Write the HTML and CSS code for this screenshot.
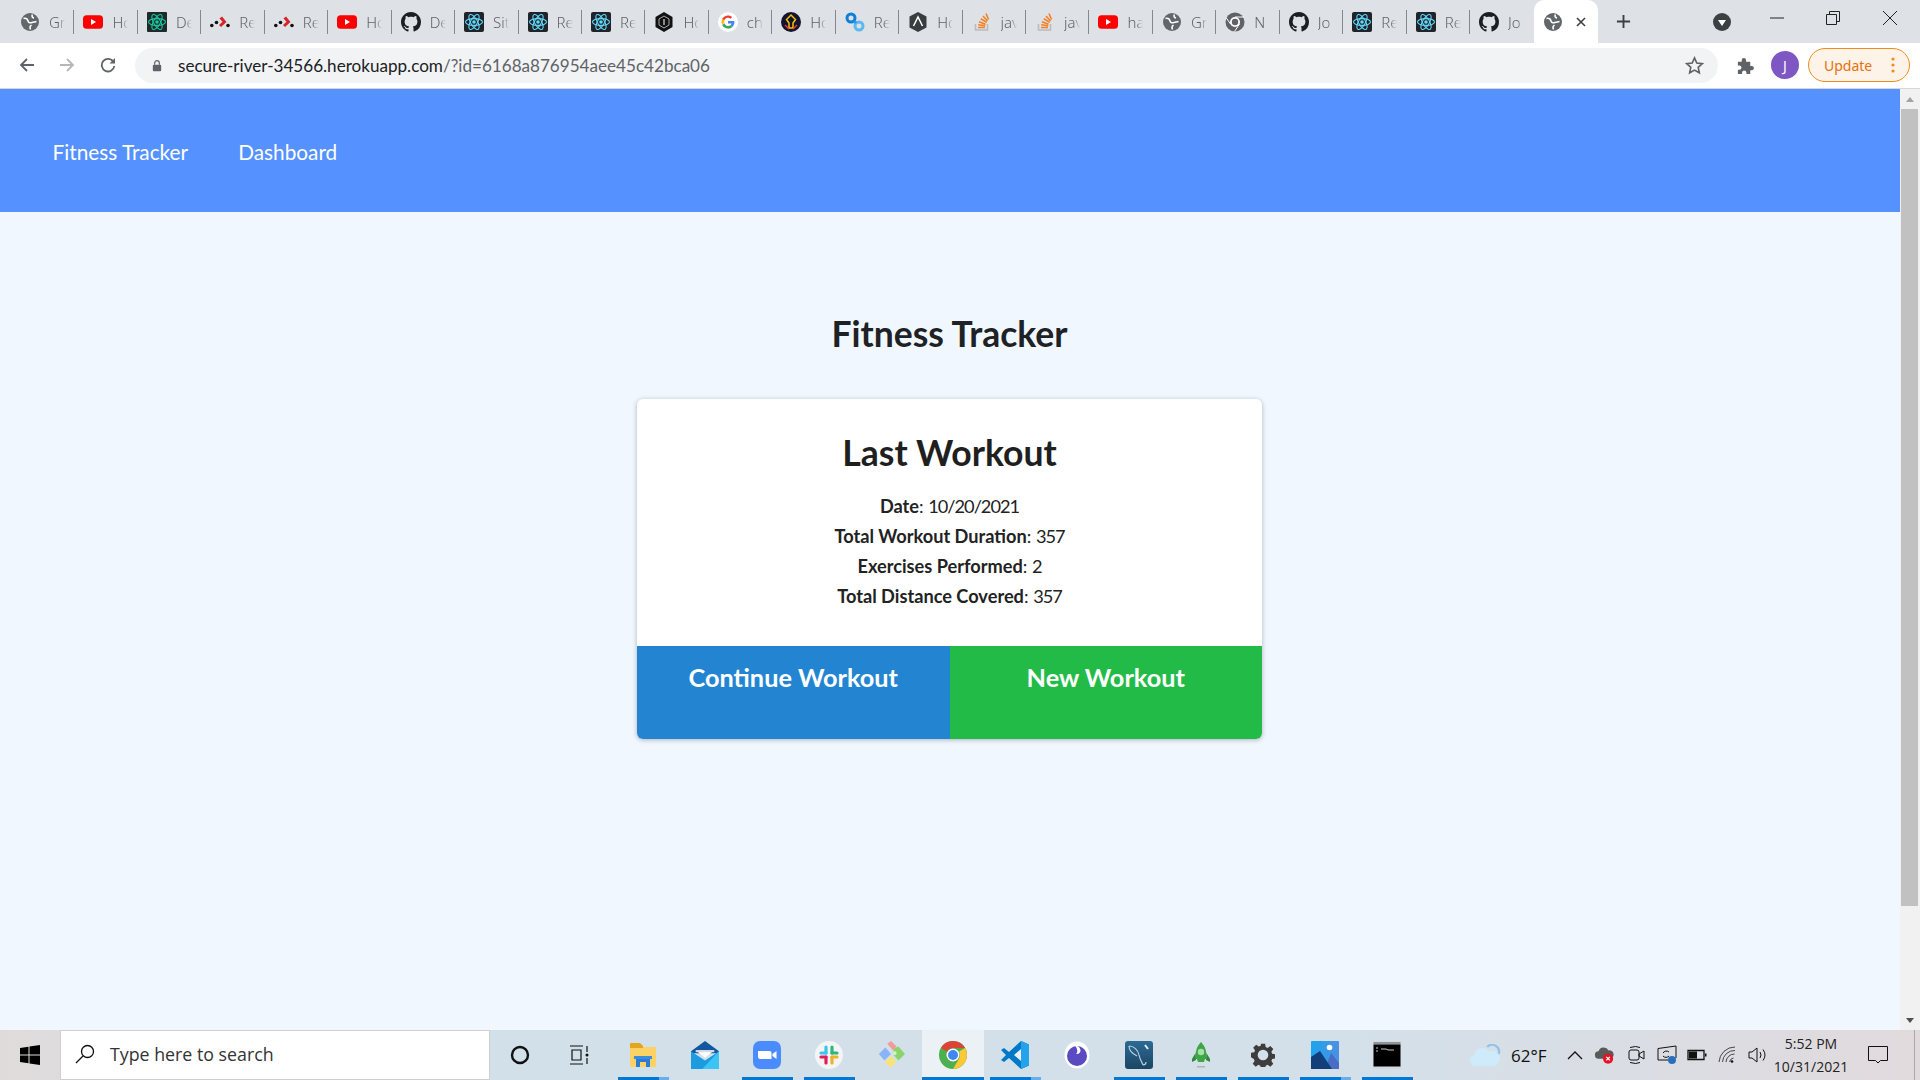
FILE: index.html
```html
<!DOCTYPE html>
<html lang="en">
<head>
<meta charset="utf-8">
<title>Fitness Tracker</title>
<link rel="stylesheet" href="styles.css">
</head>
<body>
<svg class="defs" aria-hidden="true">
  <symbol id="globe" viewBox="0 0 20 20"><circle cx="10" cy="10" r="9" fill="#63676b"/><path d="M3.500 6.500c2.500-.5 4 .5 4.500 2.500s2.500 2 4 1.500 2.500-.5 4.500-1M10.500 17.500c-1-2-.5-3.500 1-4.500M12.500 2.500c-1 1.500-.5 3 1.500 3.500" fill="none" stroke="#fff" stroke-width="1.500"/></symbol>
  <symbol id="yt" viewBox="0 0 20 20"><rect y="3.200" width="20" height="13.600" rx="3.500" fill="#f00"/><path d="M8 7l5 3-5 3z" fill="#fff"/></symbol>
  <symbol id="atomg" viewBox="0 0 20 20"><rect width="20" height="20" rx="1" fill="#1f2a2c"/><g fill="none" stroke="#1ec8a0" stroke-width="1.100"><ellipse cx="10" cy="10" rx="8.500" ry="3.400"/><ellipse cx="10" cy="10" rx="8.500" ry="3.400" transform="rotate(60 10 10)"/><ellipse cx="10" cy="10" rx="8.500" ry="3.400" transform="rotate(120 10 10)"/></g><circle cx="10" cy="10" r="1.800" fill="#1ec8a0"/></symbol>
  <symbol id="atomb" viewBox="0 0 20 20"><rect width="20" height="20" rx="2" fill="#20232a"/><g fill="none" stroke="#61dafb" stroke-width="1.100"><ellipse cx="10" cy="10" rx="8.500" ry="3.400"/><ellipse cx="10" cy="10" rx="8.500" ry="3.400" transform="rotate(60 10 10)"/><ellipse cx="10" cy="10" rx="8.500" ry="3.400" transform="rotate(120 10 10)"/></g><circle cx="10" cy="10" r="1.800" fill="#61dafb"/></symbol>
  <symbol id="dots" viewBox="0 0 20 20"><circle cx="1.800" cy="13.500" r="1.800" fill="#111"/><circle cx="6.500" cy="10.500" r="1.800" fill="#111"/><circle cx="18" cy="13.500" r="1.800" fill="#111"/><path d="M9.500 6.500l2.500-2 4.500 5.500-5.500 5-2-2 3.500-3.200z" fill="#d8232a"/></symbol>
  <symbol id="gh" viewBox="0 0 16 16"><path fill="#1b1f23" d="M8 0C3.580 0 0 3.580 0 8c0 3.540 2.290 6.530 5.470 7.590.4.070.55-.17.55-.38 0-.19-.01-.82-.01-1.490-2.010.37-2.530-.49-2.690-.94-.09-.23-.48-.94-.82-1.130-.28-.15-.68-.52-.01-.53.63-.01 1.080.58 1.230.82.720 1.210 1.870.87 2.330.66.070-.52.280-.87.510-1.070-1.780-.2-3.640-.89-3.640-3.950 0-.87.310-1.590.820-2.150-.08-.2-.36-1.020.08-2.120 0 0 .67-.21 2.200.82.640-.18 1.320-.27 2-.27s1.360.09 2 .27c1.530-1.040 2.200-.82 2.200-.82.440 1.100.16 1.920.08 2.120.51.560.82 1.270.82 2.150 0 3.070-1.870 3.750-3.650 3.950.29.250.54.730.54 1.480 0 1.070-.01 1.930-.01 2.200 0 .21.150.46.550.38A8.010 8.010 0 0016 8c0-4.420-3.580-8-8-8z"/></symbol>
  <symbol id="hex" viewBox="0 0 20 20"><path d="M10 0l8.500 5v10L10 20l-8.500-5V5z" fill="#111"/><path d="M10 4l5 3v6l-5 3-5-3V7z" fill="none" stroke="#aaa" stroke-width="1"/><path d="M10 7v6" stroke="#ddd" stroke-width="1.200"/></symbol>
  <symbol id="google" viewBox="0 0 20 20"><circle cx="10" cy="10" r="10" fill="#fff"/><path d="M16.400 10.200c0-.5 0-.9-.1-1.300H10v2.500h3.600c-.2.800-.6 1.500-1.300 2l2 1.600c1.200-1.100 2.100-2.800 2.100-4.800z" fill="#4285f4"/><path d="M10 16.500c1.800 0 3.200-.6 4.300-1.600l-2-1.600c-.6.400-1.300.7-2.300.7-1.700 0-3.200-1.200-3.700-2.700l-2.100 1.600c1.100 2.100 3.300 3.600 5.800 3.600z" fill="#34a853"/><path d="M6.300 10.800c-.3-.8-.3-1.700 0-2.500L4.200 6.700c-.9 1.700-.9 3.900 0 5.700z" fill="#fbbc05"/><path d="M10 5.800c.9 0 1.800.3 2.500 1l1.800-1.800C13.200 4 11.700 3.400 10 3.400c-2.500 0-4.700 1.400-5.800 3.400l2.100 1.600c.5-1.500 2-2.600 3.700-2.600z" fill="#ea4335"/></symbol>
  <symbol id="ring" viewBox="0 0 20 20"><circle cx="10" cy="10" r="10" fill="#14142e"/><path d="M10 3l4.500 4.500L12 11v5H8v-5L5.500 7.500z" fill="none" stroke="#f4c20d" stroke-width="1.500"/><path d="M4 13l4 4M16 13l-4 4" stroke="#e53935" stroke-width="1.500"/></symbol>
  <symbol id="link" viewBox="0 0 20 20"><g fill="none" stroke-width="3"><circle cx="6" cy="6" r="4" stroke="#0d7fd6"/><circle cx="14" cy="14" r="4" stroke="#5cb8f0"/><path d="M9 9l2 2" stroke="#2b98e4"/></g></symbol>
  <symbol id="anvil" viewBox="0 0 20 20"><path d="M10 0l8.500 4.500v11L10 20l-8.500-4.500v-11z" fill="#3a3d40"/><path d="M5.500 14L10 5l4.500 9" fill="none" stroke="#fff" stroke-width="1.500"/></symbol>
  <symbol id="so" viewBox="0 0 20 20"><path d="M3.500 12v6h12v-6" fill="none" stroke="#bcbbbb" stroke-width="1.600"/><path d="M6 15.500h7M6.200 12.700l7 1M7 9.700l6.500 2.600M8.800 6.800l6 3.600M11 4l4.500 5M14 1.500l2.500 6" fill="none" stroke="#f48024" stroke-width="1.600"/></symbol>
  <symbol id="chromeg" viewBox="0 0 20 20"><circle cx="10" cy="10" r="9.500" fill="#5f6368"/><circle cx="10" cy="10" r="5" fill="#fff"/><circle cx="10" cy="10" r="3.200" fill="#5f6368"/><path d="M10 5h9M14.500 12L9.500 19.500M5.500 12L1 5.500" stroke="#fff" stroke-width="1"/></symbol>
</svg>

<header class="tabstrip">
  <div class="tabs">
    <div class="tab"><svg class="fav"><use href="#globe"/></svg><span class="lbl">Gr</span></div>
    <div class="tab"><svg class="fav"><use href="#yt"/></svg><span class="lbl">Ho</span></div>
    <div class="tab"><svg class="fav"><use href="#atomg"/></svg><span class="lbl">De</span></div>
    <div class="tab"><svg class="fav"><use href="#dots"/></svg><span class="lbl">Re</span></div>
    <div class="tab"><svg class="fav"><use href="#dots"/></svg><span class="lbl">Re</span></div>
    <div class="tab"><svg class="fav"><use href="#yt"/></svg><span class="lbl">Ho</span></div>
    <div class="tab"><svg class="fav"><use href="#gh"/></svg><span class="lbl">De</span></div>
    <div class="tab"><svg class="fav"><use href="#atomb"/></svg><span class="lbl">Sit</span></div>
    <div class="tab"><svg class="fav"><use href="#atomb"/></svg><span class="lbl">Re</span></div>
    <div class="tab"><svg class="fav"><use href="#atomb"/></svg><span class="lbl">Re</span></div>
    <div class="tab"><svg class="fav"><use href="#hex"/></svg><span class="lbl">Ho</span></div>
    <div class="tab"><svg class="fav"><use href="#google"/></svg><span class="lbl">ch</span></div>
    <div class="tab"><svg class="fav"><use href="#ring"/></svg><span class="lbl">Ho</span></div>
    <div class="tab"><svg class="fav"><use href="#link"/></svg><span class="lbl">Re</span></div>
    <div class="tab"><svg class="fav"><use href="#anvil"/></svg><span class="lbl">Ho</span></div>
    <div class="tab"><svg class="fav"><use href="#so"/></svg><span class="lbl">jav</span></div>
    <div class="tab"><svg class="fav"><use href="#so"/></svg><span class="lbl">jav</span></div>
    <div class="tab"><svg class="fav"><use href="#yt"/></svg><span class="lbl">ha</span></div>
    <div class="tab"><svg class="fav"><use href="#globe"/></svg><span class="lbl">Gr</span></div>
    <div class="tab"><svg class="fav"><use href="#chromeg"/></svg><span class="lbl">N</span></div>
    <div class="tab"><svg class="fav"><use href="#gh"/></svg><span class="lbl">Jo</span></div>
    <div class="tab"><svg class="fav"><use href="#atomb"/></svg><span class="lbl">Re</span></div>
    <div class="tab"><svg class="fav"><use href="#atomb"/></svg><span class="lbl">Re</span></div>
    <div class="tab last"><svg class="fav"><use href="#gh"/></svg><span class="lbl">Jo</span></div>
    <div class="tab active"><svg class="fav"><use href="#globe"/></svg>
      <svg class="tabclose" viewBox="0 0 10 10"><path d="M1 1l8 8M9 1l-8 8" stroke="#3c4043" stroke-width="1.600"/></svg>
    </div>
  </div>
  <svg class="newtab" viewBox="0 0 16 16"><path d="M8 1v14M1 8h14" stroke="#3c4043" stroke-width="2"/></svg>
  <svg class="tabsearch" viewBox="0 0 18 18"><circle cx="9" cy="9" r="9" fill="#3c4043"/><path d="M5 7h8l-4 6z" fill="#fff"/></svg>
  <div class="winctl">
    <svg class="wc" viewBox="0 0 14 14"><path d="M0 7h14" stroke="#222" stroke-width="1"/></svg>
    <svg class="wc" viewBox="0 0 14 14"><path d="M.5 3.500h10v10H.5zM3.500 3.500v-3h10v10h-3" fill="none" stroke="#222" stroke-width="1"/></svg>
    <svg class="wc" viewBox="0 0 14 14"><path d="M0 0l14 14M14 0L0 14" stroke="#222" stroke-width="1"/></svg>
  </div>
</header>

<div class="toolbar">
  <svg class="tb back" viewBox="0 0 16 16"><path d="M15 8H2M8 2L2 8l6 6" fill="none" stroke="#5f6368" stroke-width="1.800"/></svg>
  <svg class="tb fwd" viewBox="0 0 16 16"><path d="M1 8h13M8 2l6 6-6 6" fill="none" stroke="#b4b7ba" stroke-width="1.800"/></svg>
  <svg class="tb reload" viewBox="0 0 16 16"><path d="M13.500 5A6.300 6.300 0 1 0 14.300 9" fill="none" stroke="#5f6368" stroke-width="1.800"/><path d="M15 1v5.500H9.500z" fill="#5f6368"/></svg>
  <div class="omnibox">
    <svg class="lock" viewBox="0 0 12 14"><path d="M3.200 6V4a2.800 2.800 0 0 1 5.600 0v2" fill="none" stroke="#5f6368" stroke-width="1.400"/><rect x="1" y="6" width="10" height="8" rx="1.200" fill="#5f6368"/></svg>
    <span class="url"><span class="host">secure-river-34566.herokuapp.com</span>/?id=6168a876954aee45c42bca06</span>
    <svg class="star" viewBox="0 0 20 20"><path d="M10 2l2.400 5.400 5.800.6-4.300 3.900 1.200 5.800L10 14.800l-5.100 2.900 1.200-5.800L1.800 8l5.800-.6z" fill="none" stroke="#5f6368" stroke-width="1.700"/></svg>
  </div>
  <svg class="puzzle" viewBox="0 0 20 20"><path d="M2 6h4V4.500a2.300 2.300 0 0 1 4.600 0V6H15v4.400h1.500a2.300 2.300 0 0 1 0 4.600H15v4H11v-1.500a2.300 2.300 0 0 0-4.600 0V19H2v-4.500h1.500a2.300 2.300 0 0 0 0-4.600H2z" fill="#5f6368"/></svg>
  <div class="avatar">J</div>
  <div class="update"><span>Update</span>
    <svg class="kebab" viewBox="0 0 4 16"><circle cx="2" cy="2" r="1.600"/><circle cx="2" cy="8" r="1.600"/><circle cx="2" cy="14" r="1.600"/></svg>
  </div>
</div>

<div class="viewport">
  <div class="page">
    <nav class="nav">
      <a class="navlink">Fitness Tracker</a>
      <a class="navlink">Dashboard</a>
    </nav>
    <main class="main">
      <h1 class="title">Fitness Tracker</h1>
      <section class="card">
        <div class="card-body">
          <h2 class="card-title">Last Workout</h2>
          <p class="row"><strong>Date</strong>: <span class="val">10/20/2021</span></p>
          <p class="row"><strong>Total Workout Duration</strong>: <span class="val">357</span></p>
          <p class="row"><strong>Exercises Performed</strong>: <span class="val">2</span></p>
          <p class="row"><strong>Total Distance Covered</strong>: <span class="val">357</span></p>
        </div>
        <div class="card-actions">
          <a class="action blue">Continue Workout</a>
          <a class="action green">New Workout</a>
        </div>
      </section>
    </main>
  </div>
  <aside class="scrollbar">
    <div class="arrow up"></div>
    <div class="thumb"></div>
    <div class="rest"></div>
    <div class="arrow down"></div>
  </aside>
</div>

<footer class="taskbar">
  <div class="start">
    <svg class="winlogo" viewBox="0 0 20 20"><path d="M0 3l8.500-1.200V9.500H0zM9.500 1.600L20 0v9.500H9.500zM0 10.500h8.500v7.700L0 17zM9.500 10.500H20V20L9.500 18.400z" fill="#000"/></svg>
  </div>
  <div class="search">
    <svg class="mag" viewBox="0 0 20 20"><circle cx="12.500" cy="7.500" r="6" fill="none" stroke="#111" stroke-width="1.300"/><path d="M8 12L1 19" stroke="#111" stroke-width="1.300"/></svg>
    <span>Type here to search</span>
  </div>
  <div class="tk cortana-slot"><svg class="ti small" viewBox="0 0 20 20"><circle cx="10" cy="10" r="8" fill="none" stroke="#111" stroke-width="2.400"/></svg></div>
  <div class="tk tv-slot"><svg class="ti small" viewBox="0 0 20 20"><path d="M1 1h13M1 19h13M3 5h9v10H3zM18 1v6M18 13v6" fill="none" stroke="#111" stroke-width="1.200"/><circle cx="18" cy="10" r="1.500" fill="#111"/></svg></div>
  <div class="tk on stack"><svg class="ti" viewBox="0 0 28 28"><path d="M1 6h26v19a1 1 0 0 1-1 1H2a1 1 0 0 1-1-1z" fill="#fbd263"/><path d="M1 3a1 1 0 0 1 1-1h9l3 3v2H1z" fill="#e4a41c"/><path d="M7 26v-9h14v9h-4v-5h-6v5z" fill="#2b7cd3"/><path d="M5 15h18v3H5z" fill="#3a8de0"/></svg></div>
  <div class="tk"><svg class="ti" viewBox="0 0 30 30"><path d="M0 11L15 0l15 11v2H0z" fill="#1357a0"/><path d="M5 10h20l-10 8z" fill="#fff"/><path d="M5 10h20v2H5z" fill="#d5dde6"/><path d="M0 11l15 10 15-10v19H0z" fill="#1d9be0"/><path d="M30 11v19H12z" fill="#3cc4f4"/></svg></div>
  <div class="tk on"><svg class="ti" viewBox="0 0 28 28"><rect width="28" height="28" rx="7" fill="#4a8cff"/><path d="M5 10h11.500a2 2 0 0 1 2 2v6H7a2 2 0 0 1-2-2z" fill="#fff"/><path d="M19.500 13l4-3v8l-4-3z" fill="#fff"/></svg></div>
  <div class="tk on"><svg class="ti" viewBox="0 0 28 28"><circle cx="14" cy="14" r="14" fill="#f4f4f4"/><g stroke-width="3.200" stroke-linecap="round"><path d="M11 6v6" stroke="#36c5f0"/><path d="M6 12h5" stroke="#36c5f0"/><path d="M17 6v6" stroke="#2eb67d"/><path d="M22 12h-5" stroke="#2eb67d"/><path d="M17 22v-6" stroke="#ecb22e"/><path d="M22 16h-5" stroke="#ecb22e"/><path d="M11 22v-6" stroke="#e01e5a"/><path d="M6 16h5" stroke="#e01e5a"/></g></svg></div>
  <div class="tk"><svg class="ti" viewBox="0 0 30 30"><path d="M2 14l7-7 6 7-7 7z" fill="#8ab4f8"/><path d="M15 16l6 6-6 7-7-7z" fill="#f6e27f"/><path d="M18 8l5-2 7 8-7 7-6-7z" fill="#8bd46c"/><path d="M11 3l4-3 6 6-4 4z" fill="#f29a9a"/><circle cx="19" cy="13" r="2" fill="#d8efcb"/></svg></div>
  <div class="tk on active"><svg class="ti" viewBox="0 0 28 28"><circle cx="14" cy="14" r="14" fill="#4caf50"/><path d="M14 0a14 14 0 0 1 12.100 7H14a7 7 0 0 0-6.100 3.500L1.900 7A14 14 0 0 1 14 0z" fill="#db4437"/><path d="M26.100 7A14 14 0 0 1 14 28l6.100-10.500A7 7 0 0 0 20 10.500z" fill="#fcc934"/><circle cx="14" cy="14" r="6.500" fill="#fff"/><circle cx="14" cy="14" r="5" fill="#4285f4"/></svg></div>
  <div class="tk on stack"><svg class="ti" viewBox="0 0 28 28"><path d="M20 0l8 3.500v21L20 28 8 17l-5 4-3-2 5-5-5-5 3-2 5 4z" fill="#0078c8"/><path d="M20 0l8 3.500v21L20 28z" fill="#23a3ec"/><path d="M20 8l-7 6 7 6z" fill="#e8f0f6"/></svg></div>
  <div class="tk"><svg class="ti" viewBox="0 0 28 28"><ellipse cx="14" cy="14" rx="12.500" ry="13.500" fill="#fff"/><circle cx="14" cy="15" r="10" fill="#5a4bc2"/><path d="M12 4.500c3 0 5.500 2.500 5.500 5s-2 4-4.500 3.500c2.500-2 1-6-1-8.500z" fill="#fff"/></svg></div>
  <div class="tk on"><svg class="ti" viewBox="0 0 28 28"><defs><linearGradient id="myg" x1="0" y1="0" x2="0" y2="1"><stop offset="0" stop-color="#2c6a94"/><stop offset="1" stop-color="#1c4563"/></linearGradient></defs><rect width="28" height="28" rx="3" fill="url(#myg)"/><path d="M4 5c5 0 9 4 10 9s3 7 4 10M4 5c0 5 4 8 8 10M18 24q3 0 3-3" fill="none" stroke="#b6cfdf" stroke-width="1.200"/><path d="M20 4l3 4" stroke="#e2ebf0" stroke-width="2"/></svg></div>
  <div class="tk on"><svg class="ti" viewBox="0 0 28 28"><path d="M14 1c5 5 6 11 5 17H9C8 12 9 6 14 1z" fill="#3fa648"/><circle cx="14" cy="11" r="3.200" fill="#a6e0a8"/><path d="M8.500 12L5 18v3l4-2zM19.500 12l3.500 6v3l-4-2z" fill="#2d8a38"/><path d="M10 18h8l-1 3h-6z" fill="#3fa648"/><rect x="10" y="25" width="8" height="1.500" fill="#b3b3b3"/></svg></div>
  <div class="tk on"><svg class="ti gear" viewBox="0 0 28 28"><path d="M11.500 1h5l.6 3.800 2.300 1 3.100-2.200 3.500 3.500-2.200 3 .9 2.400 3.800.6v5l-3.800.6-.9 2.300 2.200 3.100-3.500 3.500-3.100-2.200-2.300 1-.6 3.600h-5l-.6-3.600-2.300-1-3.100 2.200-3.500-3.500 2.200-3.100-.9-2.300L0 16.500v-5l3.800-.6.900-2.400-2.200-3 3.500-3.500 3.100 2.200 2.300-1zM14 7.800a6.200 6.200 0 1 0 0 12.400 6.200 6.200 0 0 0 0-12.400z" fill="#3d3d3d"/></svg></div>
  <div class="tk on stack"><svg class="ti" viewBox="0 0 28 28"><defs><linearGradient id="phg" x1="0" y1="0" x2="1" y2="0"><stop offset="0" stop-color="#1ca6ec"/><stop offset="1" stop-color="#4c8fe4"/></linearGradient></defs><rect width="28" height="28" rx="1" fill="url(#phg)"/><circle cx="18.500" cy="6.500" r="2.800" fill="#fff"/><path d="M14 28L20 12l8 10v6z" fill="#4a6dc4"/><path d="M0 28V16l9-6 12 18z" fill="#123f7a"/></svg></div>
  <div class="tk on"><svg class="ti" viewBox="0 0 28 28"><rect width="28" height="28" fill="#d6d9dc"/><rect x=".5" y="1" width="27" height="2.500" fill="#8f9498"/><rect x=".5" y="3.500" width="27" height="22" fill="#000"/><path d="M3 7h2M3 10h2M8 8h5l2 1h6" stroke="#c8c8c8" stroke-width="1"/></svg></div>

  <div class="tray">
    <svg class="weather" viewBox="0 0 28 20"><path d="M6 19.500a5 5 0 0 1-1.500-9.800A7.500 7.500 0 0 1 17.500 6a6 6 0 0 1 4.500 13.500z" fill="#cfeafa"/><path d="M16 2.500a6 6 0 0 1 10 6" fill="none" stroke="#8fc4ec" stroke-width="2"/></svg>
    <span class="temp">62°F</span>
    <svg class="tr caret" viewBox="0 0 16 10"><path d="M1 9l7-7 7 7" fill="none" stroke="#111" stroke-width="1.300"/></svg>
    <span class="tr-wrap"><svg class="tr" viewBox="0 0 22 20"><path d="M5 14a4 4 0 0 1 0-8 6 6 0 0 1 11-1 4.500 4.500 0 0 1 2 9z" fill="#5a5a5a"/><circle cx="15.500" cy="14" r="5.500" fill="#e81123"/><path d="M13.500 12l4 4M17.500 12l-4 4" stroke="#fff" stroke-width="1.300"/></svg></span>
    <svg class="tr video" viewBox="0 0 20 20"><rect x="2" y="5" width="10" height="10" rx="2" fill="none" stroke="#111"/><path d="M12 9l5-3v8l-5-3zM3 2.500q6-2 10 0M3 17.500q6 2 10 0" fill="none" stroke="#111"/></svg>
    <svg class="tr" viewBox="0 0 20 20"><path d="M1 3.500L19 1v12M1 3.500V15h10" fill="none" stroke="#111"/><path d="M6 8a4 4 0 0 1 6-1M12 11a4 4 0 0 1-6 0" fill="none" stroke="#111"/><circle cx="15" cy="15" r="4" fill="#2a6fbd"/></svg>
    <svg class="tr" viewBox="0 0 20 20"><path d="M1 5.500h16v9H1z" fill="none" stroke="#111" stroke-width="1.300"/><rect x="2" y="6.500" width="8" height="7" fill="#111"/><rect x="18" y="8.500" width="1.500" height="3" fill="#111"/></svg>
    <svg class="tr wifi" viewBox="0 0 20 20"><path d="M1 17A16 16 0 0 1 17 2M4.500 17A12 12 0 0 1 17 5.500M8 17A8.500 8.500 0 0 1 16.500 9M11.500 17a5 5 0 0 1 4-4" fill="none" stroke="#333" stroke-width=".9"/><circle cx="14" cy="16.500" r="1.300" fill="#111"/></svg>
    <svg class="tr" viewBox="0 0 20 20"><path d="M1 7h3l5-4v14l-5-4H1z" fill="none" stroke="#111"/><path d="M12 7q2 3 0 6M15 4.500q4 5.500 0 11" fill="none" stroke="#111"/></svg>
    <div class="clock"><span>5:52 PM</span><span>10/31/2021</span></div>
    <svg class="notif" viewBox="0 0 20 20"><path d="M.5 1.500h19v14h-7L10 18l-2.500-2.500h-7z" fill="none" stroke="#111"/></svg>
  </div>
</footer>
</body>
</html>
```

FILE: styles.css
```css
* { box-sizing: border-box; }
html, body { margin: 0; padding: 0; height: 100%; overflow: hidden; }
body { display: flex; flex-direction: column; width: 1920px; height: 1080px; font-family: "Lato", "Noto Sans", sans-serif; background: #f0f7ff; color: #1f1f1f; }
.defs { display: none; }

/* browser tab strip */
.tabstrip { flex: 0 0 43px; height: 43px; display: flex; align-items: flex-start; background: #dee1e6; padding-left: 11px; font-family: "Noto Sans", sans-serif; }
.tabs { display: flex; height: 43px; }
.tab { position: relative; width: 63.45px; height: 43px; flex: none; display: flex; align-items: center; padding: 0 0 0 9px; }
.tab::after { content: ""; position: absolute; right: 0; top: 10px; width: 1px; height: 24px; background: #84888d; }
.tab.last::after, .tab.active::after { display: none; }
.fav { width: 20px; height: 20px; flex: none; }
.lbl { margin-left: 9px; width: 16px; overflow: hidden; white-space: nowrap; font-size: 15px; font-weight: 300; color: #5f6368; -webkit-mask-image: linear-gradient(90deg, #000 60%, transparent 100%); mask-image: linear-gradient(90deg, #000 60%, transparent 100%); }
.tab.active { width: 64px; background: #fff; border-radius: 10px 10px 0 0; }
.tabclose { width: 10px; height: 10px; margin-left: 13px; }
.newtab { width: 15px; height: 15px; margin: 14px 0 0 18px; }
.tabsearch { width: 18px; height: 18px; margin: 13px 0 0 82px; }
.winctl { display: flex; gap: 42.5px; margin: 11px 0 0 39px; }
.wc { width: 14px; height: 14px; }

/* toolbar */
.toolbar { flex: 0 0 46px; height: 46px; display: flex; align-items: center; background: #fff; border-bottom: 1px solid #d5d7da; padding: 0 10px 1px 19px; }
.tb { width: 16px; height: 16px; flex: none; }
.fwd { margin-left: 24px; }
.reload { margin-left: 25px; }
.omnibox { display: flex; align-items: center; width: 1584px; height: 35px; margin-left: 19px; border-radius: 18px; background: #f1f3f4; padding: 0 14px 0 17px; }
.lock { width: 10px; height: 13px; flex: none; }
.url { margin-left: 16px; font-size: 17.1px; color: #5f6368; white-space: nowrap; flex: 1; }
.host { color: #202124; }
.star { width: 19px; height: 19px; flex: none; }
.puzzle { width: 19px; height: 19px; flex: none; margin-left: 18px; }
.avatar { width: 28px; height: 28px; flex: none; margin-left: 16px; border-radius: 50%; background: #7e57c2; color: #fff; font: 14px "Noto Sans", sans-serif; display: flex; align-items: center; justify-content: center; }
.update { width: 102px; height: 34px; flex: none; margin-left: 9px; display: flex; align-items: center; justify-content: space-between; padding: 0 14px 0 15px; border: 1px solid #f08c1a; border-radius: 17px; background: #fdf3e9; color: #e8710a; font: 14px "Noto Sans", sans-serif; }
.kebab { width: 4px; height: 16px; fill: #f08c1a; }

/* page */
.viewport { flex: 0 0 941px; height: 941px; display: flex; }
.page { flex: 1; display: flex; flex-direction: column; min-width: 0; background: #f0f7ff; }
.nav { height: 123px; flex: none; display: flex; align-items: center; gap: 50px; padding: 2px 0 0 52.5px; background: #5592ff; color: #fff; font-size: 20.8px; }
.main { display: flex; flex-direction: column; align-items: center; padding-right: 1px; }
.title { margin: 99px 0 0; font-size: 35.5px; line-height: 46px; font-weight: 700; color: #1f2225; }
.card { width: 625px; margin-top: 42px; background: #fff; border-radius: 6px; overflow: hidden; box-shadow: 0 1px 5px rgba(0,0,0,.28); }
.card-body { height: 247px; padding-top: 31px; text-align: center; }
.card-title { margin: 0 0 15px; font-size: 35.6px; line-height: 46px; font-weight: 700; color: #1f1f1f; }
.row { margin: 0; font-size: 18.2px; line-height: 30.1px; color: #222; }
.row strong { font-weight: 700; }
.val { letter-spacing: -1px; font-weight: 400; color: #222; }
.card-actions { display: flex; height: 93px; }
.action { flex: 1; padding-top: 13px; text-align: center; color: #fff; font-size: 25.3px; line-height: 36px; font-weight: 700; }
.blue { background: #2385d2; }
.green { background: #22bb48; }

/* scrollbar */
.scrollbar { width: 20px; flex: none; display: flex; flex-direction: column; background: #f1f1f1; padding: 0 2px 0 1px; }
.arrow { flex: none; height: 20px; display: flex; align-items: center; justify-content: center; }
.arrow::before { content: ""; border-left: 4px solid transparent; border-right: 4px solid transparent; }
.arrow.up::before { border-bottom: 5px solid #a3a3a3; }
.arrow.down::before { border-top: 5px solid #505050; }
.thumb { height: 797px; background: #c1c1c1; }
.rest { flex: 1; }

/* taskbar */
.taskbar { flex: 0 0 50px; height: 50px; display: flex; align-items: stretch; background: linear-gradient(90deg, #e0dbdb 0, #d2e0ea 24%, #d3e0ea 70%, #e1dadd 100%); font-family: "Open Sans", "Noto Sans", sans-serif; color: #111; }
.start { width: 60px; flex: none; display: flex; align-items: center; justify-content: center; }
.winlogo { width: 20px; height: 20px; }
.search { width: 430px; flex: none; display: flex; align-items: center; background: #fff; border: 1px solid #cfcfcf; padding: 0 0 2px 14px; font-size: 17.8px; color: #333; }
.mag { width: 20px; height: 20px; margin: 0 15px 0 0; }
.tk { width: 62px; flex: none; display: flex; align-items: center; justify-content: center; position: relative; }
.cortana-slot { width: 59px; }
.tv-slot { width: 60px; margin-right: 3px; }
.ti { width: 28px; height: 28px; }
.ti.small { width: 20px; height: 20px; }
.ti.gear { width: 24px; height: 24px; }
.tk.on::after { content: ""; position: absolute; left: 5.5px; right: 5.5px; bottom: 0; height: 3px; background: #0078d4; }
.tk.on.stack::after { right: 15.5px; box-shadow: 10px 0 0 #69aee6; }
.tk.active { background: #ecf1f6; }
.tk.active::after { left: 0; right: 0; }
.tray { flex: 1; display: flex; align-items: center; position: relative; }
.tray::after { content: ""; position: absolute; right: 5px; top: 0; bottom: 0; width: 1px; background: #a9a9ad; }
.weather { width: 32px; height: 23px; margin-left: 51px; }
.temp { margin-left: 10px; font-size: 17px; width: 42px; }
.tr { width: 20px; height: 20px; flex: none; display: block; }
.caret { width: 16px; height: 10px; }
.tray > .tr { margin-left: 10px; }
.tray > .caret { margin-left: 14px; }
.tray > .video { margin-left: 13px; }
.tray > .wifi { margin-left: 11px; }
.tr-wrap { margin-left: 11px; }
.clock { display: flex; flex-direction: column; align-items: center; margin-left: 5px; font-size: 14px; line-height: 23px; width: 76px; color: #222; }
.notif { width: 20px; height: 20px; margin-left: 19px; }
```
